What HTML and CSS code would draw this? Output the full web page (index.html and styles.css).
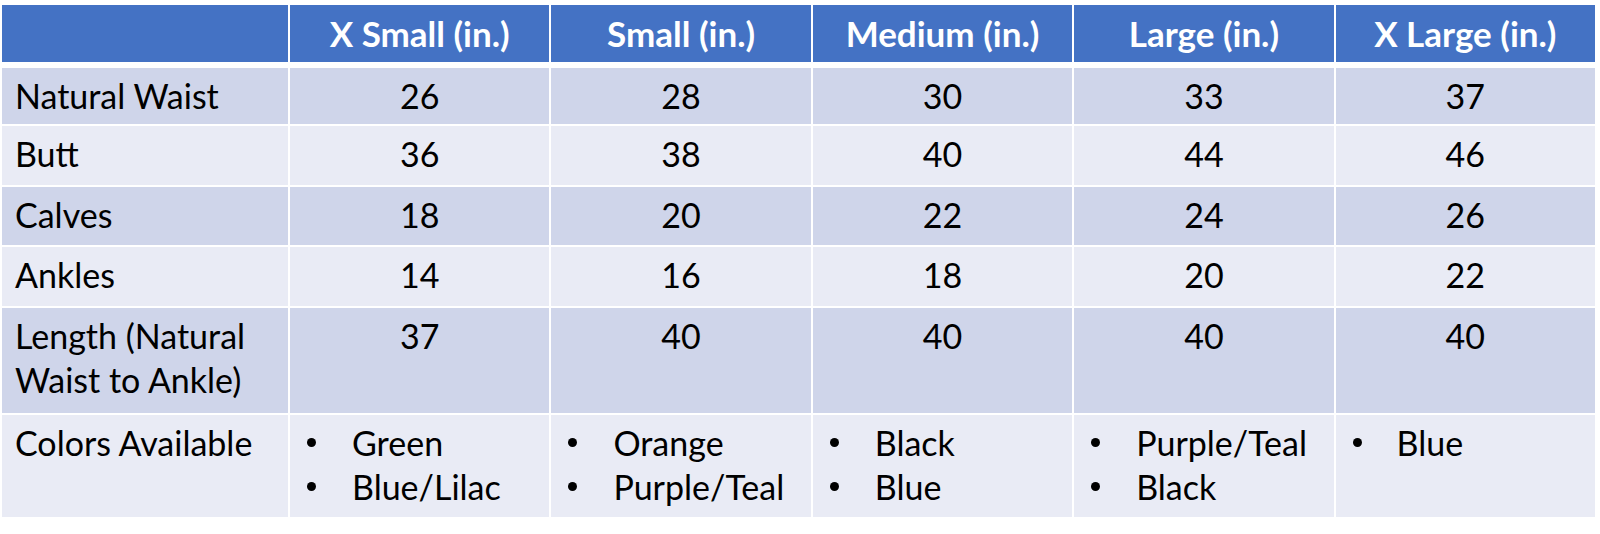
FILE: index.html
```html
<!DOCTYPE html>
<html lang="en">
<head>
<meta charset="utf-8">
<title>Size Chart</title>
<link rel="stylesheet" href="styles.css">
</head>
<body>
<div class="size-table">
  <div class="cell head"></div>
  <div class="cell head">X Small (in.)</div>
  <div class="cell head">Small (in.)</div>
  <div class="cell head">Medium (in.)</div>
  <div class="cell head">Large (in.)</div>
  <div class="cell head">X Large (in.)</div>

  <div class="cell odd label">Natural Waist</div>
  <div class="cell odd num">26</div>
  <div class="cell odd num">28</div>
  <div class="cell odd num">30</div>
  <div class="cell odd num">33</div>
  <div class="cell odd num">37</div>

  <div class="cell even label">Butt</div>
  <div class="cell even num">36</div>
  <div class="cell even num">38</div>
  <div class="cell even num">40</div>
  <div class="cell even num">44</div>
  <div class="cell even num">46</div>

  <div class="cell odd label">Calves</div>
  <div class="cell odd num">18</div>
  <div class="cell odd num">20</div>
  <div class="cell odd num">22</div>
  <div class="cell odd num">24</div>
  <div class="cell odd num">26</div>

  <div class="cell even label">Ankles</div>
  <div class="cell even num">14</div>
  <div class="cell even num">16</div>
  <div class="cell even num">18</div>
  <div class="cell even num">20</div>
  <div class="cell even num">22</div>

  <div class="cell odd label">Length (Natural Waist to Ankle)</div>
  <div class="cell odd num">37</div>
  <div class="cell odd num">40</div>
  <div class="cell odd num">40</div>
  <div class="cell odd num">40</div>
  <div class="cell odd num">40</div>

  <div class="cell even label">Colors Available</div>
  <div class="cell even"><ul class="bullets"><li>Green</li><li>Blue/Lilac</li></ul></div>
  <div class="cell even"><ul class="bullets"><li>Orange</li><li>Purple/Teal</li></ul></div>
  <div class="cell even"><ul class="bullets"><li>Black</li><li>Blue</li></ul></div>
  <div class="cell even"><ul class="bullets"><li>Purple/Teal</li><li>Black</li></ul></div>
  <div class="cell even"><ul class="bullets bullets-tight"><li>Blue</li></ul></div>
</div>
</body>
</html>
```
FILE: styles.css
```css
html, body {
  margin: 0;
  padding: 0;
  background: #ffffff;
}

body {
  font-family: "Lato", "Liberation Sans", sans-serif;
  color: #000000;
}

.size-table {
  display: grid;
  width: 1593px;
  margin: 5px 0 0 2px;
  grid-template-columns: 286px repeat(5, 1fr);
  grid-template-rows: 61px 56px 59px 58px 59px 105px 102px;
  column-gap: 2px;
  row-gap: 2px;
}

.cell {
  box-sizing: border-box;
  padding: 6px 12px 0 12px;
  font-size: 34px;
  line-height: 44px;
}

.head {
  background: #4472C4;
  color: #ffffff;
  font-weight: 700;
  font-size: 35px;
  text-align: center;
  padding-top: 6px;
  margin-bottom: 4px;
}

.odd {
  background: #CFD5EA;
}

.even {
  background: #E9EBF5;
}

.label {
  padding-left: 13px;
}

.num {
  text-align: center;
}

.bullets {
  list-style: none;
  margin: 0;
  padding: 0;
}

.bullets li {
  display: grid;
  grid-template-columns: 50px auto;
}

.bullets li::before {
  content: "";
  width: 9px;
  height: 9px;
  border-radius: 50%;
  background: #000000;
  margin: 17px 0 0 5px;
}

.bullets-tight li {
  grid-template-columns: 49px auto;
}
```
